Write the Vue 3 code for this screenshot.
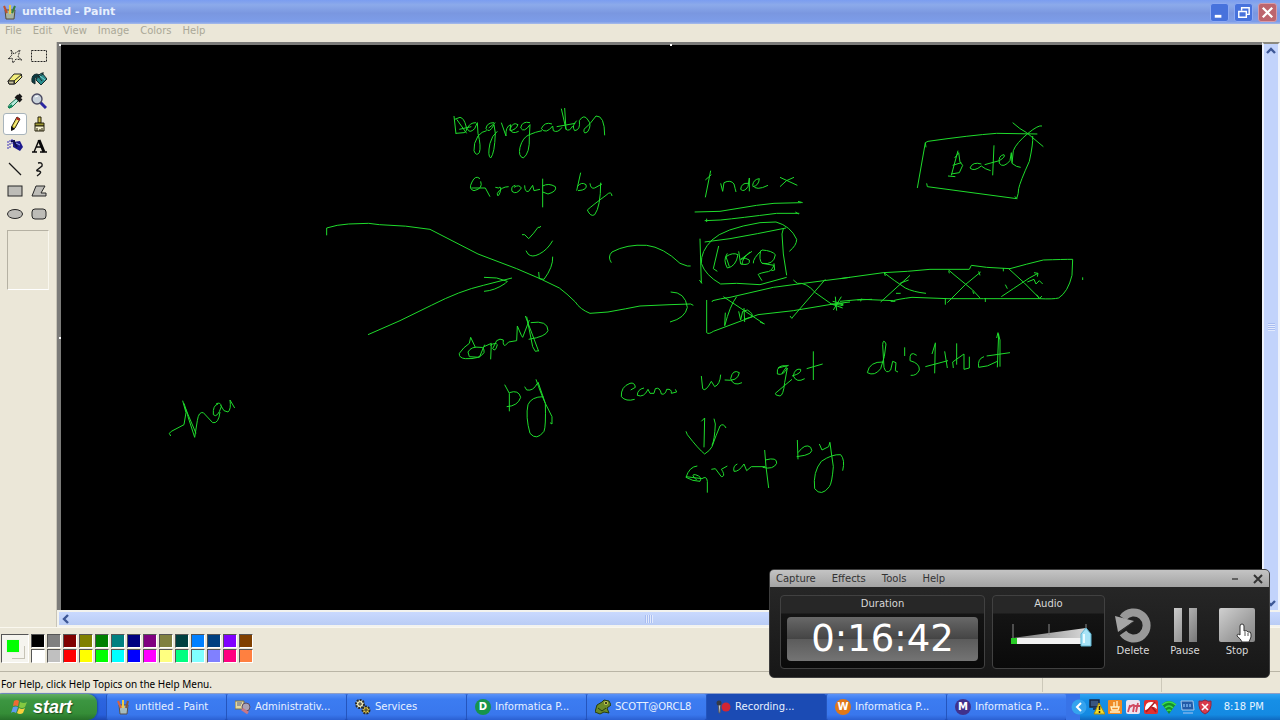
<script setup>
const menus = ['File', 'Edit', 'View', 'Image', 'Colors', 'Help']
const recorderMenus = ['Capture', 'Effects', 'Tools', 'Help']
const tools = [
  'Free-form select', 'Select', 'Eraser', 'Fill', 'Pick color', 'Magnifier', 'Pencil', 'Brush',
  'Airbrush', 'Text', 'Line', 'Curve', 'Rectangle', 'Polygon', 'Ellipse', 'Rounded rectangle',
]
const palette = [
  '#000000', '#808080', '#800000', '#808000', '#008000', '#008080', '#000080', '#800080', '#808040', '#004040', '#0080ff', '#004080', '#8000ff', '#804000',
  '#ffffff', '#c0c0c0', '#ff0000', '#ffff00', '#00ff00', '#00ffff', '#0000ff', '#ff00ff', '#ffff80', '#00ff80', '#80ffff', '#8080ff', '#ff0080', '#ff8040',
]
const tasks = [
  { label: 'untitled - Paint', icon: 'paint' },
  { label: 'Administrativ...', icon: 'admin' },
  { label: 'Services', icon: 'gears' },
  { label: 'Informatica P...', icon: 'disc', letter: 'D', color: '#16944c' },
  { label: 'SCOTT@ORCL8', icon: 'frog' },
  { label: 'Recording...', icon: 'record', active: true },
  { label: 'Informatica P...', icon: 'disc', letter: 'W', color: '#e07818' },
  { label: 'Informatica P...', icon: 'disc', letter: 'M', color: '#40318c' },
]

/* Pencil strokes, grouped by area; each group is drawn at three units to the pixel. */
const ink = [
  {
    x: 310, y: 90,
    d: [
      'M432 78L438 132M434 88L450 82Q462 84 468 108Q474 124 462 128L438 130M440 88L470 130M448 118L484 110',
      'M498 98Q478 98 472 116Q478 132 494 116L502 98L504 130Q514 170 508 188Q498 200 492 182Q490 160 504 138Q516 124 530 122',
      'M552 98Q530 98 528 116Q538 132 552 104L556 130Q554 190 542 204Q532 198 540 160Q546 136 562 124M536 114L556 98',
      'M574 98L588 138Q586 110 602 104L600 122Q618 120 624 104Q608 94 600 118Q606 134 626 124',
      'M660 98Q636 92 632 114Q642 130 660 104L658 140Q660 190 640 204Q624 200 630 172Q638 142 658 134Q676 126 696 122',
      'M726 102Q704 94 694 116Q708 134 728 108L730 122Q744 130 756 112M754 56L768 118M764 54L768 118Q778 126 788 108M740 110L796 100',
      'M800 92Q784 108 794 122Q812 120 808 92Q822 70 834 90Q846 104 834 124Q820 136 822 118Q840 104 858 78Q884 76 884 136',
      'M510 266Q496 254 486 276Q474 298 492 302Q520 296 512 274M484 294L526 294L540 320',
      'M556 292L566 294Q576 284 570 308Q562 326 562 310Q574 290 596 290M616 286Q602 288 606 304Q620 316 634 294Q628 282 612 292M644 286Q644 308 656 304L668 286L672 302L690 298',
      'M698 266L698 352M698 288Q716 278 736 290Q742 304 714 312L698 306',
      'M812 248L800 302M802 290Q814 274 828 284Q834 300 804 302M840 280Q842 298 854 294L876 282M872 278Q872 350 854 374Q842 382 832 360Q850 344 888 316Q904 300 906 318',
      'M50 436L50 414Q80 404 116 402L176 400L208 404Q290 406 360 418L504 492L620 536L690 566L748 594Q770 610 796 636Q810 658 840 670L894 666Q950 656 990 648L1080 644L1142 642L1150 646',
      'M636 434L644 434L656 446Q672 430 684 412L690 412L692 408',
      'M648 482L654 492Q666 504 688 492Q712 480 728 452',
      'M686 546L688 566L702 568Q730 530 728 500',
      'M174 734L270 692L364 646Q450 602 520 586L606 564M522 562L560 564L592 574L586 580Q554 602 522 604',
      'M904 518Q892 500 906 486Q950 462 1010 466Q1060 472 1110 520L1132 528L1142 528',
      'M1082 606Q1126 606 1132 652Q1126 684 1080 696',
    ],
  },
  {
    x: 350, y: 260,
    d: [
      'M362 232L358 250Q340 262 328 280Q326 294 346 296Q390 298 402 278Q404 260 390 262Q364 258 354 276L358 290L388 292L404 254M362 232L376 262',
      'M402 260L424 250L422 298M420 256Q438 246 442 254Q436 278 428 266L440 242Q450 234 460 240Q458 258 466 256L476 246L500 242L502 198L514 226L518 232L538 180',
      'M526 168L566 274M530 170L548 260L556 274L566 272M542 188Q594 180 594 212Q588 230 536 238',
      'M464 374L478 400L478 454M478 398Q506 388 512 412Q504 438 470 440',
      'M524 380L530 390Q550 394 562 370M558 358Q574 404 586 430Q588 500 582 514Q560 544 540 520Q526 470 534 434Q544 410 580 410M564 366L586 430L606 470L606 492L600 488',
    ],
  },
  {
    x: 590, y: 150,
    d: [
      'M362 62L346 142M346 90L364 74M392 100L398 124L402 98Q422 88 432 102Q436 118 438 126',
      'M474 100Q454 98 452 118Q462 128 474 110L478 84L478 124M488 110Q506 108 508 86Q490 88 488 106Q498 124 534 106M570 82L622 106M612 82Q588 88 570 110',
      'M314 186L390 184L500 166L552 160L634 158M624 154L638 158M344 212L392 210Q450 204 560 190L628 190M350 206L350 216M616 186L626 192',
      'M330 266L334 400M328 390L336 400M344 276L420 266Q500 252 588 234M580 236L576 252L580 312L590 376',
      'M620 268Q620 286 598 304M620 268Q602 228 558 216L510 218Q400 236 366 270Q332 304 334 340Q346 376 392 402L440 400L510 404L590 382',
      'M386 288L370 356L382 364M412 310Q398 330 412 354Q438 350 444 314Q428 306 408 320L418 350',
      'M446 304L452 342Q482 348 478 330Q466 320 452 328L486 304M480 306Q456 324 456 344M512 302Q506 330 516 340Q552 346 556 314Q546 302 516 300Q488 326 490 340',
      'M516 340L552 346Q544 366 528 366Q498 372 506 376L516 392M552 340L554 360L544 362',
      'M350 450L350 548Q356 554 370 544L504 494L610 482L730 462L780 456M366 456L368 452Q390 446 420 442L550 412L640 400L780 382',
      'M400 440L520 520M440 440Q420 466 404 528M406 488L404 526M446 484L452 510L458 484L472 480Q490 490 486 500L462 508M462 474L464 516M510 516L524 522',
      'M610 390L622 400Q648 396 676 428L724 462L760 466M706 388L606 504M600 498L606 506M736 440L740 482M754 440L730 480M724 462L758 474M728 454L760 462',
    ],
  },
  {
    x: 840, y: 90,
    d: [
      'M256 158L232 294M256 158L264 154Q390 136 470 130L592 132M256 158L258 172M260 280L262 290L530 326Q536 310 536 296Q540 276 568 214Q580 160 578 138M524 320L532 326',
      'M518 98Q540 118 560 128L610 170M606 108Q596 104 564 130Q528 160 520 182L516 220Q530 232 542 232',
      'M354 182L334 256M344 204L356 188L360 216L368 226L358 248L334 252M338 226L364 218M324 258L346 260',
      'M424 222Q398 214 390 234Q402 246 424 228L436 236L452 242M462 166L458 256M434 224L478 212Q498 200 492 194Q474 196 478 220Q490 236 510 212L514 188L516 218',
      'M0 566L130 548L202 544L270 538L388 538L394 526L440 532L510 536Q560 522 610 510Q670 508 698 508L696 556Q684 606 656 624Q640 628 598 626L430 626L324 626L216 622Q172 628 160 632L66 628L0 634',
      'M132 548Q150 562 164 572L196 594Q220 606 258 610M210 556L122 636M180 580L206 570M168 610L182 610M52 630L96 628M64 626L62 634M152 634L166 634M132 546L136 558',
      'M326 540L342 554L398 600L420 624M422 546L376 584L322 638M326 542L328 550M398 604L402 612M436 624L436 636M316 624L316 644M416 544L420 556M490 534L490 544',
      'M506 536L552 578L600 626M594 550L568 564L520 596L484 620M496 584L502 596M562 576L582 568L588 582L598 572L608 582M582 548L594 550L592 560M590 614L598 626L606 618',
      'M728 562L728 570M0 640L6 646M2 648L10 642',
    ],
  },
  {
    x: 600, y: 320,
    d: [
      'M92 210L106 202Q104 186 90 190Q62 200 64 230Q78 246 104 238M132 204Q112 208 112 226Q132 234 144 208L150 220L162 220L166 206Q180 200 184 222Q196 226 200 208Q216 206 214 220L230 216L226 208',
      'M304 168L308 206Q316 218 334 184L344 200Q360 194 362 164M374 180Q414 186 418 158Q398 146 392 176Q400 200 426 188',
      'M562 138Q528 132 532 162Q550 168 562 144L554 188Q550 226 540 228Q524 226 526 220Q554 196 576 178M534 144L566 136M546 160L560 140M576 168Q606 160 602 148Q584 144 580 168Q590 190 614 176M640 94L640 180M620 146L668 132',
      'M850 126Q808 124 802 158Q824 170 842 146Q856 110 858 72Q850 54 848 74L852 142Q858 164 872 150L878 124L888 128L886 152L894 156M914 82L914 108M950 106Q928 90 930 122Q960 130 958 150Q950 168 932 166',
      'M1006 68L1004 160M1006 70L996 102M976 140L1044 122M1034 94L1042 144M1070 70L1070 134M1060 144L1058 126L1092 102L1092 148L1108 144L1108 110M1152 110Q1132 116 1136 142Q1162 142 1192 124M1196 42L1192 142M1190 54L1194 38L1200 60L1200 140M1160 108L1230 98',
      'M304 304L314 294L312 382M342 296L346 312Q344 360 336 376M258 334L262 344Q296 388 314 402Q330 392 336 380Q348 346 360 318Q370 308 378 324',
      'M292 438Q268 440 258 472Q278 484 300 484Q308 470 286 464Q270 462 290 480M258 470L306 476Q320 466 322 484L322 518',
      'M334 448L346 446L364 470Q376 470 368 454L364 448L382 438M412 432Q398 438 402 454Q416 456 432 432L440 452L454 440L496 440M494 390L498 440L506 504M496 420Q532 410 530 430Q520 450 488 442',
      'M592 360L594 418M594 398Q616 368 632 382Q648 404 590 410M658 372L666 390L686 380L690 366M690 368Q694 400 700 440Q696 490 688 500Q664 532 644 506Q638 456 664 424Q696 402 722 404Q736 420 728 452',
    ],
  },
  {
    x: 0, y: 220,
    d: ['M512 648L508 640L514 634L552 614L558 578L548 542M552 550Q562 580 564 590L584 652L592 602Q596 574 610 578L638 608Q656 612 660 576M554 560L588 640M654 552Q638 556 640 584Q652 596 664 560Q662 544 648 552M662 556L672 572L684 576Q694 568 690 540L704 564'],
  },
]
</script>

<template>
  <div class="desktop">
    <header class="titlebar">
      <svg class="app-icon" viewBox="0 0 16 16"><path d="M3 6h10l-1 9H4z" fill="#a6b4a2" stroke="#574d3b" /><path d="M5 9L2 2" stroke-width="2" stroke="#c4502c" /><path d="M8 10V1" stroke="#e8cb4a" stroke-width="2" /><path d="M10 9l3-7" stroke="#36803c" stroke-width="2" /></svg>
      <h1>untitled - Paint</h1>
      <div class="window-buttons">
        <button aria-label="Minimize"><svg viewBox="0 0 18 18"><path d="M4 13h7" stroke="#fff" stroke-width="3" /></svg></button>
        <button aria-label="Restore"><svg viewBox="0 0 18 18"><path d="M7 7V4h8v7h-3M4 8h8v6H4zM7 4h8M4 8h8" fill="none" stroke="#fff" stroke-width="1.5" /></svg></button>
        <button class="close" aria-label="Close"><svg viewBox="0 0 18 18"><path d="M4 4l10 10M14 4L4 14" stroke="#fff" stroke-width="2.4" /></svg></button>
      </div>
    </header>

    <nav class="menubar">
      <button v-for="m in menus" :key="m">{{ m }}</button>
    </nav>

    <div class="workspace">
      <aside class="toolbox">
        <div class="tools">
          <button v-for="(t, i) in tools" :key="t" :aria-label="t" :class="{ picked: i === 6 }">
            <svg viewBox="0 0 16 16">
              <g v-if="i === 0" fill="none" stroke="#222" stroke-dasharray="2 1"><path d="M4 2l3 4 6-4-2 7 4 3-6-1-3 4-1-5-4 1 4-4z" /></g>
              <rect v-if="i === 1" x=".5" y="2.5" width="15" height="11" fill="none" stroke="#222" stroke-dasharray="2 1" />
              <g v-if="i === 2" stroke="#222"><path d="M1 10l6-7h7l1 3-7 7H2z" fill="#f2ee7a" /><path d="M1 10h6l8-7M7 10l1 3" fill="none" /><path d="M1 10h6v3H2z" fill="#c9c3a0" /></g>
              <g v-if="i === 3" stroke="#152a2c"><path d="M6 5l5-3 5 6-6 6-5-5z" fill="#298c8c" /><path d="M7 5l4 5M5 8l7-5V1" fill="none" /><path d="M6 3Q0 3 1 11L4 13V7l4-3z" fill="#0b3b42" /><path d="M9 5l5 4" stroke="#83d2d2" /></g>
              <g v-if="i === 4"><path d="M10 5l2 2-7 7-3 1-1-1 2-3z" fill="#b5eadb" stroke="#16704e" /><path d="M9 3l5 5M11 5l3-3" stroke="#181818" stroke-width="4" /><path d="M2 15l3-3" stroke="#078a55" stroke-width="2" /></g>
              <g v-if="i === 5"><path d="M9 9l6 6" stroke="#2b27a0" stroke-width="3" /><circle cx="6" cy="6" r="5" fill="#c8d2da" stroke="#4a4a61" stroke-width="1.4" /><path d="M4 4l3-1" stroke="#fff" /></g>
              <g v-if="i === 6"><path d="M5 10l5-9 3 2-5 9-3 2z" fill="#e1d548" stroke="#302818" /><path d="M10 1l3 2-1 2-3-2z" fill="#b12822" /><path d="M4 10v5l4-2z" fill="#111" /><path d="M7 10l4-6" stroke="#fff7a0" /></g>
              <g v-if="i === 7" stroke="#25210b"><path d="M7 1h3v6H7z" fill="#d0c24c" /><path d="M4 7h9v3H4z" fill="#9b9734" /><path d="M4 10h9v5H4z" fill="#f5f1ce" /><path d="M6 12v3M9 13v2M11 12v3" /></g>
              <g v-if="i === 8"><path d="M6 4l7-1 3 6-3 4-7-4z" fill="#1d198d" /><path d="M7 4l3 5M4 3h4" stroke="#11104d" stroke-width="2" /><path d="M1 3v9M3 2v8M5 1v6" stroke="#3a30bb" stroke-dasharray="2 1" /><path d="M9 5l4 2" stroke="#92a4ee" /></g>
              <g v-if="i === 9" fill="none" stroke="#080808"><path d="M8 2l5 12" stroke-width="3" /><path d="M8 2L3 14M5 9h6M1 14h5M9 14h7" stroke-width="1.4" /></g>
              <path v-if="i === 10" d="M2 2l12 12" stroke="#181818" stroke-width="1.3" />
              <path v-if="i === 11" d="M7 2Q12 1 11 5L6 9Q5 10 8 10Q12 11 6 15" fill="none" stroke="#181818" stroke-width="1.4" />
              <rect v-if="i === 12" x="1" y="3" width="14" height="10" fill="#bdbcb7" stroke="#262626" />
              <path v-if="i === 13" d="M5 3h9L10 10h5v3H1z" fill="#bdbcb7" stroke="#262626" />
              <ellipse v-if="i === 14" cx="8" cy="8" rx="7.5" ry="4.5" fill="#bdbcb7" stroke="#262626" />
              <rect v-if="i === 15" x="1" y="3" width="14" height="10" rx="3" fill="#bdbcb7" stroke="#262626" />
            </svg>
          </button>
        </div>
        <div class="tool-options"></div>
      </aside>

      <main class="canvas">
        <svg class="ink" width="1200" height="566" viewBox="61 45 1200 566">
          <g v-for="(g, i) in ink" :key="i" :transform="`translate(${g.x} ${g.y}) scale(0.33333)`">
            <path v-for="(d, j) in g.d" :key="j" :d="d" />
          </g>
        </svg>
      </main>
      <div class="vscroll">
        <button aria-label="Scroll up"><svg viewBox="0 0 14 14"><path d="M3 9l4-4 4 4" fill="none" stroke="#3d5796" stroke-width="2.4" /></svg></button>
        <div class="vgrip"></div>
        <button aria-label="Scroll down"><svg viewBox="0 0 14 14"><path d="M3 5l4 4 4-4" fill="none" stroke="#3d5796" stroke-width="2.4" /></svg></button>
      </div>
      <div class="hscroll">
        <button aria-label="Scroll left"><svg viewBox="0 0 14 14"><path d="M9 3L5 7l4 4" fill="none" stroke="#3d5796" stroke-width="2.4" /></svg></button>
        <div class="hgrip"></div>
      </div>
      <div class="handles"><i class="corner"></i><i class="top"></i><i class="left"></i></div>
    </div>

    <section class="colorbox">
      <div class="current"><i></i></div>
      <div class="swatches">
        <button v-for="c in palette" :key="c" :aria-label="c" :style="{ backgroundColor: c }"></button>
      </div>
    </section>

    <footer class="status">
      <span class="hint">For Help, click Help Topics on the Help Menu.</span>
      <span class="cell"></span><span class="cell"></span>
    </footer>

    <div class="taskbar">
      <button class="start">
        <svg viewBox="0 0 18 16"><path d="M3 2q3-2 5 0L7 7Q4 6 2 7z" fill="#ef6a34" /><path d="M9 3q4 2 7 0l-2 5q-3 2-6 0z" fill="#83c941" /><path d="M2 8q3-1 5 0l-2 6q-3-2-5 0z" fill="#5c9cf0" /><path d="M8 9q3 2 6 0l-2 5q-3 2-6 0z" fill="#f8cf3c" /></svg>
        start
      </button>
      <div class="tasks">
        <button v-for="(t, i) in tasks" :key="i" :class="{ active: t.active }">
          <span v-if="t.icon === 'disc'" class="disc" :style="{ backgroundColor: t.color }">{{ t.letter }}</span>
          <svg v-else viewBox="0 0 16 16">
            <g v-if="t.icon === 'paint'"><path d="M4 6h9l-1 9H5z" fill="#a5bcbe" stroke="#574f4a" /><path d="M6 9L3 2" stroke="#dd6339" stroke-width="2" /><path d="M8 9V1" stroke="#f1cd45" stroke-width="2" /><path d="M11 9l2-7" stroke="#8a5736" stroke-width="2" /></g>
            <g v-if="t.icon === 'admin'"><path d="M0 2h9v8H0z" fill="#e5d8a0" stroke="#77704f" /><path d="M2 4h5M2 6h4" stroke="#53608a" /><circle cx="11" cy="8" r="4" fill="#aaa2b6" stroke="#5e4d63" /><path d="M7 10l6 4" stroke="#c97786" stroke-width="3" /></g>
            <g v-if="t.icon === 'gears'"><circle cx="5" cy="5" r="4" fill="#eee9b8" stroke="#292928" stroke-width="2" stroke-dasharray="2 1" /><circle cx="11" cy="11" r="3.5" fill="#ebcf45" stroke="#292928" stroke-width="2" stroke-dasharray="2 1" /><path d="M5 3v4M3 5h4M11 9v4M9 11h4" stroke="#333" /></g>
            <g v-if="t.icon === 'frog'"><path d="M0 13l2-7 5-3 2-2 5 1 2 4-4 3 2 5-5-1-4 2z" fill="#6b8a28" stroke="#253c12" /><circle cx="11" cy="4" r="2" fill="#c8ca54" /><circle cx="11" cy="4" r="1" fill="#111" /><path d="M3 9l4 3 4-3" fill="none" stroke="#253c12" /></g>
            <g v-if="t.icon === 'record'"><circle cx="11" cy="8" r="4.5" fill="#d22532" /><path d="M3 4h3L5 14H4z" fill="#c4c8c9" stroke="#55555f" /><circle cx="4" cy="4" r="2.5" fill="#353a45" /></g>
          </svg>
          <span class="label">{{ t.label }}</span>
        </button>
      </div>
      <div class="tray">
        <button aria-label="Show hidden icons"><svg viewBox="0 0 16 16"><circle cx="8" cy="8" r="7.5" fill="#35a3ee" /><path d="M10 4L6 8l4 4" fill="none" stroke="#fff" stroke-width="2" /></svg></button>
        <svg viewBox="0 0 16 16"><path d="M1 1h9v7H1zM4 10h8" fill="#39557f" stroke="#18243f" stroke-width="1.5" /><path d="M10 4l6 11H5z" fill="#f5dd28" stroke="#a58a11" /><path d="M10.500 7v4M10.500 12v2" stroke="#222" stroke-width="1.5" /></svg>
        <svg viewBox="0 0 16 16"><rect x="1" y="1" width="14" height="14" rx="1" fill="#ef8b25" /><path d="M7 3v5M10 2v6M4 8h8l-1 3H5zM3 13h10" fill="none" stroke="#fff3c9" stroke-width="1.3" /></svg>
        <svg viewBox="0 0 16 16"><rect x="1" y="1" width="14" height="14" rx="2" fill="#eee4ef" /><path d="M5 6l-2 7M5 8q5-4 4 0l-1 5M13 4l-2 9M10 7h5" fill="none" stroke="#d14a62" stroke-width="1.8" /></svg>
        <svg viewBox="0 0 16 16"><rect x="1" y="1" width="14" height="14" rx="2" fill="#df3131" /><path d="M2 11Q2 2 9 3Q14 4 14 10L11 8 8 8 6 10z" fill="#fff" /><path d="M3 13L12 3M9 8l4 5" stroke="#a81a20" stroke-width="1.5" /></svg>
        <svg viewBox="0 0 16 16"><path d="M1 5q7-6 14 0l-7 10z" fill="#158f2c" /><path d="M1 6q7-6 14 0M4 9q4-4 8 0M6 12q2-2 4 0" fill="none" stroke="#3bdc4c" stroke-width="1.6" /></svg>
        <svg viewBox="0 0 16 16"><path d="M2 2h12l1 9H3z" fill="#235ba8" stroke="#a5cbee" /><path d="M5 5v3M8 5v3M11 5v3M4 14h10" stroke="#78b1ec" stroke-width="1.5" /></svg>
        <svg viewBox="0 0 16 16"><path d="M8 1q3 2 6 1 1 10-6 13Q1 12 2 2q3 1 6-1z" fill="#d83a4b" stroke="#8e2740" /><path d="M5 5l6 6M11 5l-6 6" stroke="#fff" stroke-width="1.6" /></svg>
        <time>8:18 PM</time>
      </div>
    </div>

    <section class="recorder">
      <div class="rec-menu">
        <button v-for="m in recorderMenus" :key="m">{{ m }}</button>
        <span class="rec-window">
          <button aria-label="Minimize recorder"><svg viewBox="0 0 10 10"><path d="M2 5h6" stroke="#444" stroke-width="1.5" /></svg></button>
          <button aria-label="Close recorder"><svg viewBox="0 0 10 10"><path d="M1 1l8 8M9 1L1 9" stroke="#333" stroke-width="2" /></svg></button>
        </span>
      </div>
      <div class="rec-body">
        <div class="panel duration">
          <h2>Duration</h2>
          <output>0:16:42</output>
        </div>
        <div class="panel audio">
          <h2>Audio</h2>
          <svg viewBox="0 0 84 30">
            <defs><linearGradient id="wedge" x2="1"><stop stop-color="#777" /><stop offset="1" stop-color="#d8d8d8" /></linearGradient></defs>
            <path d="M3 16L76 6v10z" fill="url(#wedge)" />
            <path d="M3 2v14M39 2v11M76 2v6" stroke="#8a8a8a" />
            <rect x="1" y="16" width="78" height="6" fill="#f1f1f1" /><rect x="1" y="16" width="6" height="6" fill="#27cb25" />
            <path d="M71 12l5-6 5 6v12H71z" fill="#a7e3f6" stroke="#5cb5d2" /><path d="M74 12v9" stroke="#e8fbff" stroke-width="2" />
          </svg>
        </div>
        <button class="action"><svg viewBox="0 0 38 36"><path d="M9 11A13 13 0 1 1 9 26" fill="none" stroke="#989898" stroke-width="8" /><path d="M1 9l3 16L20 14z" fill="#a5a5a5" /><path d="M6 25l13-10" stroke="#333" /></svg><span>Delete</span></button>
        <button class="action"><svg viewBox="0 0 38 36"><defs><linearGradient id="metal" x2="1" y2="1"><stop stop-color="#ccc" /><stop offset="1" stop-color="#777" /></linearGradient></defs><path d="M8 1h8v34H8zM23 1h8v34h-8z" fill="url(#metal)" /></svg><span>Pause</span></button>
        <button class="action"><svg viewBox="0 0 38 36"><defs><linearGradient id="stop" x2="1" y2="1"><stop stop-color="#d0d0d0" /><stop offset=".6" stop-color="#a0a0a0" /><stop offset="1" stop-color="#868686" /></linearGradient></defs><rect x="1" y="1" width="36" height="34" rx="2" fill="url(#stop)" /></svg><span>Stop</span></button>
      </div>
      <svg class="pointer" viewBox="0 0 16 20"><path d="M4 11V3q0-2 2-2t2 2v5q3-1 4 1 3-1 3 2v3l-2 5H6q-1-3-5-6 0-3 3-1z" fill="#fff" stroke="#333" /><path d="M9 9v4M12 10v3" stroke="#555" /></svg>
    </section>
  </div>
</template>

<style>
html, body { background: #ebe7d8; }
</style>

<style scoped>
* { box-sizing: border-box; }
button { border: 0; padding: 0; background: none; font: inherit; color: inherit; }
svg { display: block; }
.desktop { position: relative; display: flex; flex-direction: column; min-height: 100vh; overflow: hidden; background: #ebe7d8; font: 10px/14px "DejaVu Sans", Verdana, sans-serif; color: #111; }

.titlebar { display: flex; align-items: center; gap: 4px; height: 24px; padding: 0 3px 0 2px; background: linear-gradient(#7b9df0, #8caaea 20%, #7a97e0 55%, #7d9de9 90%, #a7bbea); color: #e7effd; }
.app-icon { width: 16px; height: 16px; }
.titlebar h1 { flex: 1; margin: 0; font-size: 11px; line-height: 24px; }
.window-buttons { display: flex; gap: 5px; }
.window-buttons button { width: 19px; height: 19px; border: 1px solid #8ca9f3; border-radius: 3px; background: #4772dc; }
.window-buttons .close { background: #bd656e; border-color: #d59ba9; }
.menubar { display: flex; align-items: flex-start; gap: 11px; height: 18px; padding-left: 5px; color: #aaa797; }

.workspace { position: relative; flex: 1; display: grid; grid-template-columns: 57px 1fr 18px; grid-template-rows: 1fr 17px; }
.toolbox { grid-row: 1 / 3; padding: 3px 3px 0; border-right: 1px solid #c9c5b8; }
.tools { display: grid; grid-template-columns: 24px 24px; grid-auto-rows: 23px 22px; }
.tools button { display: grid; place-items: center; height: 22px; border-radius: 3px; }
.tools .picked { background: #fff; border: 1px solid #a8b4bb; }
.tools svg { width: 16px; height: 16px; }
.tool-options { width: 42px; height: 60px; margin: 5px 0 0 4px; border: 1px solid #b5b1a3; border-right-color: #f9f7ee; border-bottom-color: #fff; }
.canvas { position: relative; overflow: hidden; border: solid #7b7b79; border-width: 3px 0 0 4px; background: #000; }
.ink { position: absolute; left: 0; top: 0; fill: none; stroke: #1fdc2c; stroke-width: 3px; }
.handles i { position: absolute; width: 2px; height: 2px; background: #fff; }
.handles .corner { left: 59px; top: 2px; }
.handles .top { left: 670px; top: 2px; }
.handles .left { left: 59px; top: 295px; }
.vscroll { display: flex; flex-direction: column; justify-content: space-between; align-items: center; border: solid #eef2fb; border-width: 2px 2px 0; border-top-color: #8b897e; background: #c2d3fb; }
.vscroll svg, .hscroll svg { width: 14px; height: 14px; }
.vgrip { width: 7px; height: 8px; background: repeating-linear-gradient(#a8bdf1 0 1px, #e2eafd 1px 2px); }
.hscroll { position: relative; grid-column: 2 / 4; display: flex; align-items: center; border: solid #f3f3ee; border-width: 2px 0 2px 2px; background: linear-gradient(#c9d9fe, #b9ccf5); }
.hgrip { position: absolute; left: 48%; width: 8px; height: 8px; background: repeating-linear-gradient(90deg, #a8bdf1 0 1px, #e2eafd 1px 2px); }

.colorbox { display: flex; align-items: center; gap: 2px; height: 45px; padding: 0 0 2px 1px; border-top: 1px solid #faf8ef; border-bottom: 1px solid #b9b5a6; }
.current { position: relative; width: 28px; height: 29px; border: 1px solid #555; border-right-color: #fff; border-bottom-color: #fff; background: #f5f4ee; }
.current i { position: absolute; left: 4px; top: 4px; width: 14px; height: 14px; border: 1px solid #efefe7; background: #00ff00; }
.current::after { content: ""; position: absolute; right: 3px; bottom: 3px; width: 12px; height: 12px; border: solid #c6c3b6; border-width: 0 1px 1px 0; }
.swatches { display: grid; grid-template-columns: repeat(14, 14px); grid-auto-rows: 14px; gap: 1px 2px; }
.swatches button { border: 1px solid #555; border-right-color: #fff; border-bottom-color: #fff; }
.status { display: flex; align-items: center; height: 22px; padding: 2px 0 0 1px; border-bottom: 1px solid #8f9fc5; color: #000; font: 10px/20px "Noto Sans", sans-serif; }
.hint { flex: 1; }
.cell { width: 119px; height: 16px; border-left: 1px solid #ccc8b9; }

.taskbar { display: flex; height: 26px; background: linear-gradient(#3d79eb, #2c65df 20%, #285fdb 80%, #1d48b2); color: #fff; }
.start { display: flex; align-items: center; gap: 4px; width: 97px; padding-left: 11px; border-radius: 0 9px 9px 0; background: linear-gradient(#62ae63, #3c9641 25%, #358d37 75%, #267029); box-shadow: 1px 0 2px #174b9b; font: italic bold 18px/24px "Liberation Sans", Arial, sans-serif; text-shadow: 1px 1px 1px #1f4d20; }
.start svg { width: 18px; height: 16px; }
.tasks { flex: 1; display: grid; grid-template-columns: repeat(8, minmax(0, 1fr)); margin-left: 9px; }
.tasks button { display: flex; align-items: center; gap: 4px; padding-left: 8px; border-left: 1px solid #2455bd; border-radius: 2px; background: linear-gradient(#5a93f8, #3c7cf1 20%, #3977ed 80%, #2b60d2); color: #e8f1ff; }
.tasks .active { background: #1b4bb4; }
.tasks svg { flex: none; width: 16px; height: 16px; }
.label { white-space: nowrap; }
.disc { flex: none; width: 16px; height: 16px; border-radius: 50%; color: #fff; font: bold 10px/16px "DejaVu Sans", sans-serif; text-align: center; }
.tray { display: flex; align-items: center; gap: 2px; width: 214px; padding: 0 16px 0 5px; background: linear-gradient(90deg, #3873e8 0 14px, transparent 14px), linear-gradient(#2fa4f3, #168fe6 25%, #148ae2 80%, #0f69c0); }
.tray svg { width: 16px; height: 16px; }
.tray time { margin-left: auto; white-space: nowrap; color: #e8f5ff; }

.recorder { position: absolute; right: 10px; bottom: 42px; width: 501px; border: 1px solid #3d3d3d; border-radius: 5px; overflow: hidden; background: linear-gradient(#292929, #171717); color: #d8d8d8; }
.rec-menu { display: flex; align-items: center; gap: 16px; height: 17px; padding: 0 6px; background: linear-gradient(#c4c4c4, #a3a3a3); color: #333; }
.rec-window { display: flex; gap: 13px; margin-left: auto; }
.rec-window svg { width: 10px; height: 10px; }
.rec-body { display: flex; align-items: center; height: 90px; padding-left: 10px; }
.panel { height: 74px; border: 1px solid #414141; border-radius: 4px; background: linear-gradient(#272727 0 17px, #141414 18px, #0a0a0a); text-align: center; }
.panel h2 { margin: 0; font: 10px/16px "DejaVu Sans", sans-serif; }
.duration { width: 205px; margin-right: 7px; padding: 0 6px; }
.duration output { display: block; height: 44px; margin-top: 5px; border-radius: 4px; background: linear-gradient(#686868, #444 50%, #5c5c5c 51%, #747474); color: #fff; font-size: 37px; line-height: 44px; }
.audio { width: 113px; margin-right: 2px; }
.audio svg { width: 84px; height: 30px; margin: 10px auto 0 17px; }
.action { display: flex; flex-direction: column; align-items: center; gap: 1px; width: 52px; }
.action svg { width: 38px; height: 36px; }
.pointer { position: absolute; right: 17px; bottom: 34px; width: 16px; height: 20px; }
</style>
